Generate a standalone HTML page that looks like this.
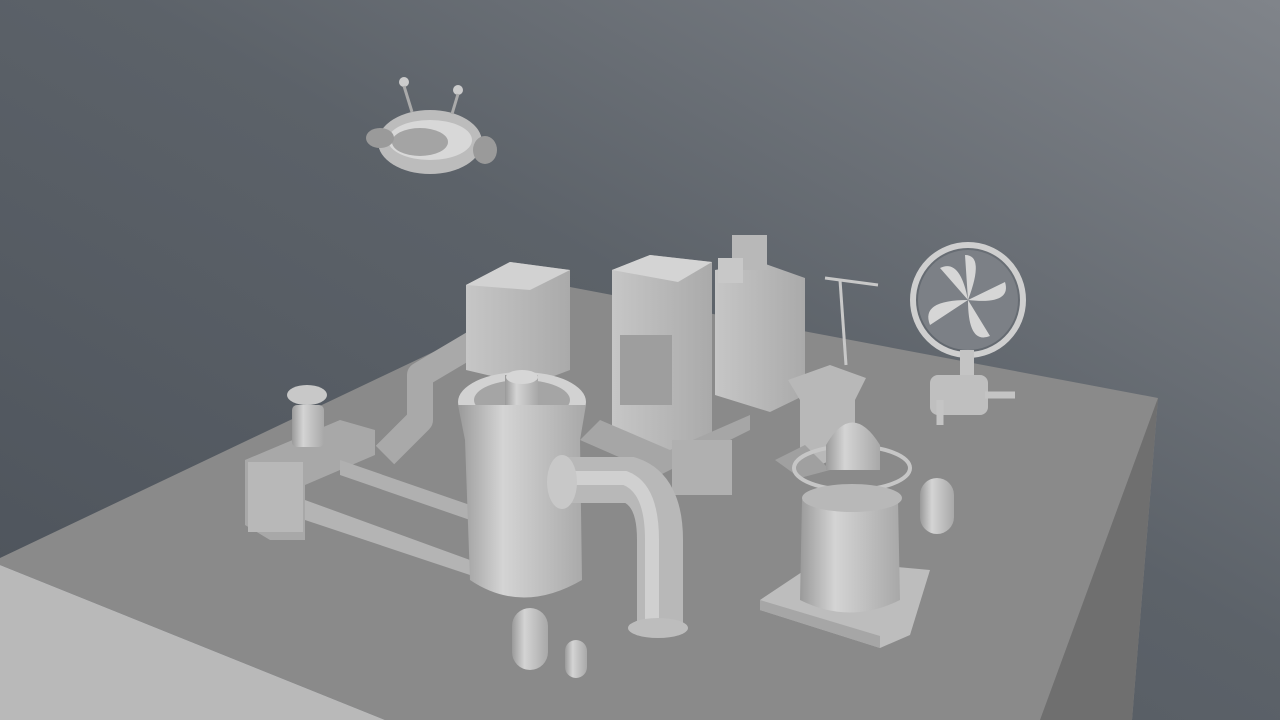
<!DOCTYPE html>
<html><head><style>
html,body{margin:0;padding:0;width:1280px;height:720px;overflow:hidden}
svg{display:block}
</style></head><body>
<svg width="1280" height="720" viewBox="0 0 1280 720" xmlns="http://www.w3.org/2000/svg">
<defs>
<linearGradient id="bg" x1="0" y1="1" x2="1" y2="0">
<stop offset="0" stop-color="#4c525a"/><stop offset="0.55" stop-color="#5c6269"/><stop offset="1" stop-color="#80848a"/>
</linearGradient>
<linearGradient id="cyl" x1="0" x2="1">
<stop offset="0" stop-color="#9a9a9a"/><stop offset="0.35" stop-color="#d4d4d4"/><stop offset="1" stop-color="#a8a8a8"/>
</linearGradient>
<linearGradient id="box" x1="0" x2="1">
<stop offset="0" stop-color="#c6c6c6"/><stop offset="1" stop-color="#aaaaaa"/>
</linearGradient>
</defs>
<rect width="1280" height="720" fill="url(#bg)"/>
<!-- platform -->
<polygon points="0,558 570,287 1158,398 1132,720 385,720 0,565" fill="#8a8a8a"/>
<polygon points="0,565 385,720 0,720" fill="#b9b9b9"/>
<polygon points="1158,398 1132,720 1040,720" fill="#6f6f6f"/>
<!-- drone -->
<ellipse cx="430" cy="142" rx="52" ry="32" fill="#bcbcbc"/>
<ellipse cx="430" cy="140" rx="42" ry="20" fill="#d8d8d8"/>
<ellipse cx="420" cy="142" rx="28" ry="14" fill="#a4a4a4"/>
<ellipse cx="380" cy="138" rx="14" ry="10" fill="#9a9a9a"/>
<ellipse cx="485" cy="150" rx="12" ry="14" fill="#9a9a9a"/>
<circle cx="404" cy="82" r="5" fill="#ccc"/><circle cx="458" cy="90" r="5" fill="#ccc"/>
<line x1="404" y1="86" x2="412" y2="112" stroke="#aaa" stroke-width="3"/>
<line x1="458" y1="94" x2="452" y2="114" stroke="#aaa" stroke-width="3"/>
<!-- left block/bench -->
<polygon points="245,460 340,420 375,430 375,455 305,485 305,540 270,540 245,525" fill="#a8a8a8"/>
<rect x="248" y="462" width="55" height="70" fill="#b8b8b8"/>
<polygon points="305,500 470,560 470,575 305,520" fill="#b4b4b4"/>
<polygon points="340,460 470,505 470,520 340,475" fill="#b0b0b0"/>
<rect x="292" y="405" width="32" height="42" rx="5" fill="url(#cyl)"/>
<ellipse cx="307" cy="395" rx="20" ry="10" fill="#c8c8c8"/>
<!-- pipe from left box -->
<path d="M496,330 L420,375 L420,420 L385,455" stroke="#a9a9a9" stroke-width="26" fill="none" stroke-linejoin="round"/>
<!-- back left box -->
<polygon points="466,285 510,262 570,270 570,370 530,385 466,370" fill="url(#box)"/>
<polygon points="466,285 510,262 570,270 530,290" fill="#d2d2d2"/>
<!-- middle machine -->
<polygon points="612,270 650,255 712,262 712,450 680,470 612,440" fill="url(#box)"/>
<polygon points="612,270 650,255 712,262 678,282" fill="#d4d4d4"/>
<rect x="620" y="335" width="52" height="70" fill="#9e9e9e"/>
<polygon points="580,440 660,475 750,430 750,415 670,450 600,420" fill="#a6a6a6"/>
<rect x="672" y="440" width="60" height="55" fill="#b0b0b0"/>
<!-- tall stacked machine -->
<polygon points="715,270 760,262 805,278 805,395 770,412 715,395" fill="url(#box)"/>
<rect x="732" y="235" width="35" height="35" fill="#b8b8b8"/>
<rect x="718" y="258" width="25" height="25" fill="#c8c8c8"/>
<line x1="840" y1="280" x2="846" y2="365" stroke="#c8c8c8" stroke-width="3"/>
<line x1="825" y1="278" x2="878" y2="285" stroke="#c8c8c8" stroke-width="3"/>
<!-- small pedestal -->
<polygon points="788,380 830,365 866,378 855,400 855,450 820,465 800,450 800,400" fill="#b8b8b8"/>
<polygon points="775,460 805,445 830,470 800,478" fill="#a0a0a0"/>
<!-- fan -->
<circle cx="968" cy="300" r="55" fill="none" stroke="#cfcfcf" stroke-width="6"/>
<circle cx="968" cy="300" r="50" fill="#7c8086"/>
<path d="M968,300 L940,268 Q960,258 968,300 Z M968,300 L1005,282 Q1012,305 968,300 Z M968,300 L990,336 Q968,345 968,300 Z M968,300 L930,325 Q920,300 968,300 Z M968,300 L965,255 Q985,255 968,300Z" fill="#d6d6d6"/>
<rect x="960" y="350" width="14" height="30" fill="#c4c4c4"/>
<rect x="930" y="375" width="58" height="40" rx="8" fill="#bfbfbf"/>
<path d="M985,395 L1015,395 M940,400 L940,425" stroke="#c4c4c4" stroke-width="7"/>
<!-- big cylinder -->
<ellipse cx="522" cy="402" rx="64" ry="30" fill="#d2d2d2"/>
<ellipse cx="522" cy="400" rx="48" ry="20" fill="#a5a5a5"/>
<rect x="505" y="375" width="33" height="30" fill="url(#cyl)"/>
<ellipse cx="522" cy="377" rx="16" ry="7" fill="#d6d6d6"/>
<path d="M458,405 L586,405 L580,440 L582,580 Q522,615 470,580 L465,440 Z" fill="url(#cyl)"/>
<!-- elbow pipe -->
<path d="M560,480 L630,480 Q660,490 660,540 L660,625" stroke="#b8b8b8" stroke-width="46" fill="none"/>
<path d="M560,478 L625,478 Q652,488 652,540 L652,625" stroke="#d0d0d0" stroke-width="14" fill="none"/>
<ellipse cx="658" cy="628" rx="30" ry="10" fill="#bdbdbd"/>
<ellipse cx="562" cy="482" rx="15" ry="27" fill="#c8c8c8"/>
<!-- small capsules -->
<rect x="512" y="608" width="36" height="62" rx="18" fill="url(#cyl)"/>
<rect x="565" y="640" width="22" height="38" rx="11" fill="url(#cyl)"/>
<rect x="920" y="478" width="34" height="56" rx="17" fill="url(#cyl)"/>
<!-- reactor -->
<polygon points="760,600 820,560 930,570 910,635 880,648 760,610" fill="#bdbdbd"/>
<polygon points="760,610 880,648 880,636 760,600" fill="#a6a6a6"/>
<path d="M802,500 L898,500 L900,600 Q850,625 800,600 Z" fill="url(#cyl)"/>
<ellipse cx="852" cy="468" rx="58" ry="22" fill="none" stroke="#c6c6c6" stroke-width="4"/>
<path d="M826,470 L826,445 Q852,400 880,445 L880,470 Z" fill="url(#cyl)"/>
<ellipse cx="852" cy="498" rx="50" ry="14" fill="#b8b8b8"/>
</svg>
</body></html>
